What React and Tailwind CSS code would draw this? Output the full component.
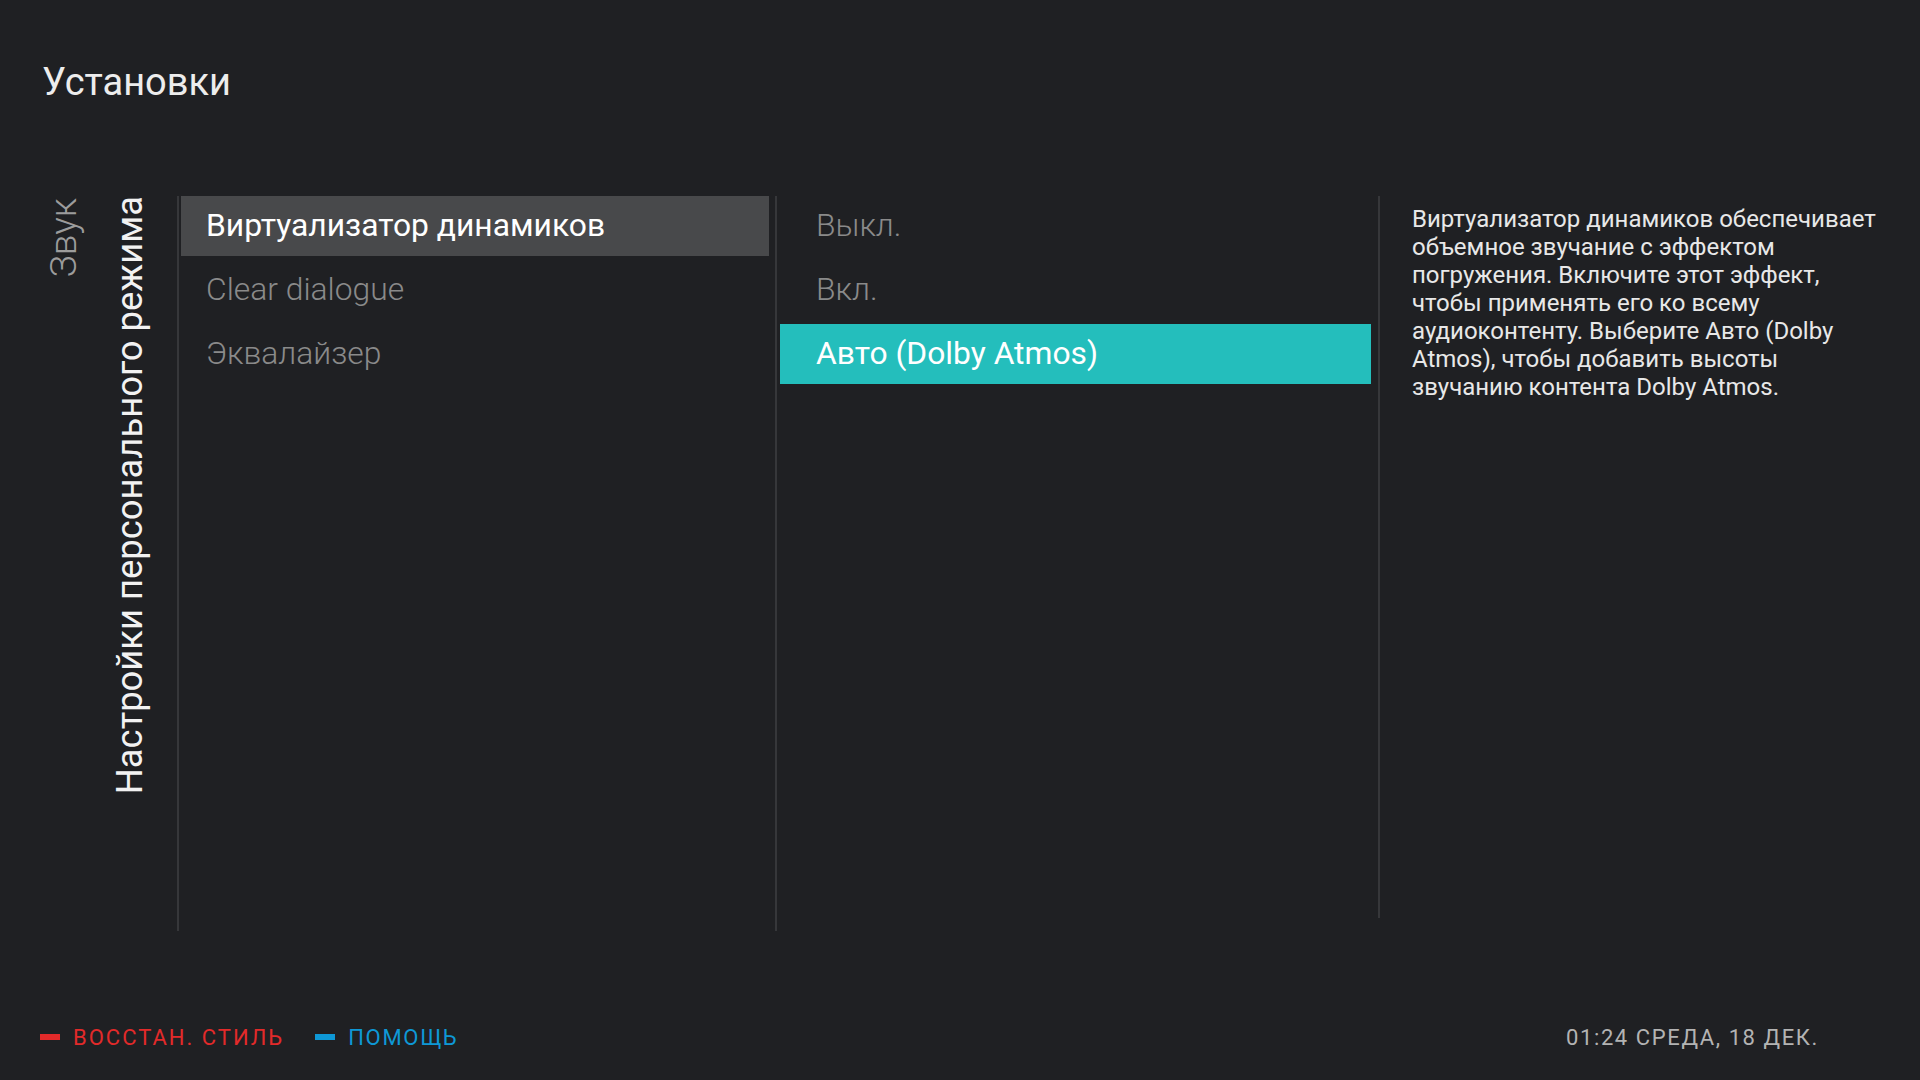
import React from 'react';

const SECTIONS = ['Виртуализатор динамиков', 'Clear dialogue', 'Эквалайзер'];
const OPTIONS = ['Выкл.', 'Вкл.', 'Авто (Dolby Atmos)'];

const HELP = [
  'Виртуализатор динамиков обеспечивает',
  'объемное звучание с эффектом',
  'погружения. Включите этот эффект,',
  'чтобы применять его ко всему',
  'аудиоконтенту. Выберите Авто (Dolby',
  'Atmos), чтобы добавить высоты',
  'звучанию контента Dolby Atmos.'
];

function MenuItem({ label, active, tone, pad }) {
  const bg = active ? (tone === 'teal' ? 'bg-[#24bebc] text-white' : 'bg-[#48494b] text-white') : 'text-[#8a8a8a] font-light';
  return (
    <div className={`h-[60px] mb-[4px] flex items-center text-[31.8px] leading-none ${pad} ${bg}`}>
      {label}
    </div>
  );
}

export default function App() {
  return (
    <div
      className="w-[1920px] h-[1080px] bg-[#1f2023] overflow-hidden flex flex-col"
      style={{ fontFamily: 'Roboto, "Noto Sans", sans-serif' }}
    >
      {/* заголовок */}
      <div className="pt-[63px] pl-[42px] text-[38px] leading-[38px] text-[#ededed]">Установки</div>

      {/* основная область */}
      <div className="mt-[95px] h-[735px] flex">
        <div className="w-[177px] shrink-0 flex items-start pl-[45px]">
          <span className="mt-[2px] [writing-mode:vertical-rl] rotate-180 text-[37px] leading-[37px] text-[#9c9c9c] font-light">
            Звук
          </span>
          <span className="ml-[30px] [writing-mode:vertical-rl] rotate-180 text-[36.4px] leading-[36px] text-[#f2f2f2]">
            Настройки персонального режима
          </span>
        </div>

        <div className="w-[2px] shrink-0 bg-[#36373a]" />

        <div className="w-[596px] shrink-0 pl-[2px] pr-[6px]">
          {SECTIONS.map((s, i) => (
            <MenuItem key={s} label={s} active={i === 0} pad="pl-[25px]" />
          ))}
        </div>

        <div className="w-[2px] shrink-0 bg-[#36373a]" />

        <div className="w-[601px] shrink-0 pl-[3px] pr-[7px]">
          {OPTIONS.map((o, i) => (
            <MenuItem key={o} label={o} active={i === 2} tone="teal" pad="pl-[36px]" />
          ))}
        </div>

        <div className="w-[2px] h-[722px] shrink-0 bg-[#36373a]" />

        <div className="pl-[32px] pt-[9px] text-[24px] leading-[28px] text-[#e8e8e8]">
          {HELP.map((l) => (
            <div key={l} className="whitespace-nowrap">{l}</div>
          ))}
        </div>
      </div>

      {/* нижняя панель */}
      <div className="mt-[86px] h-[40px] flex items-center pl-[40px] pr-[101px] text-[22px] tracking-[2px]">
        <div className="flex items-center gap-[13px]">
          <span className="w-[20px] h-[6px] bg-[#e22a2a]" />
          <span className="text-[#e22a2a]">ВОССТАН. СТИЛЬ</span>
        </div>
        <div className="ml-[31px] flex items-center gap-[13px]">
          <span className="w-[20px] h-[6px] bg-[#0e98d6]" />
          <span className="text-[#0e98d6] tracking-[1.7px]">ПОМОЩЬ</span>
        </div>
        <div className="ml-auto text-[#b3b3b3] tracking-[1.6px]">01:24 СРЕДА, 18 ДЕК.</div>
      </div>
    </div>
  );
}
